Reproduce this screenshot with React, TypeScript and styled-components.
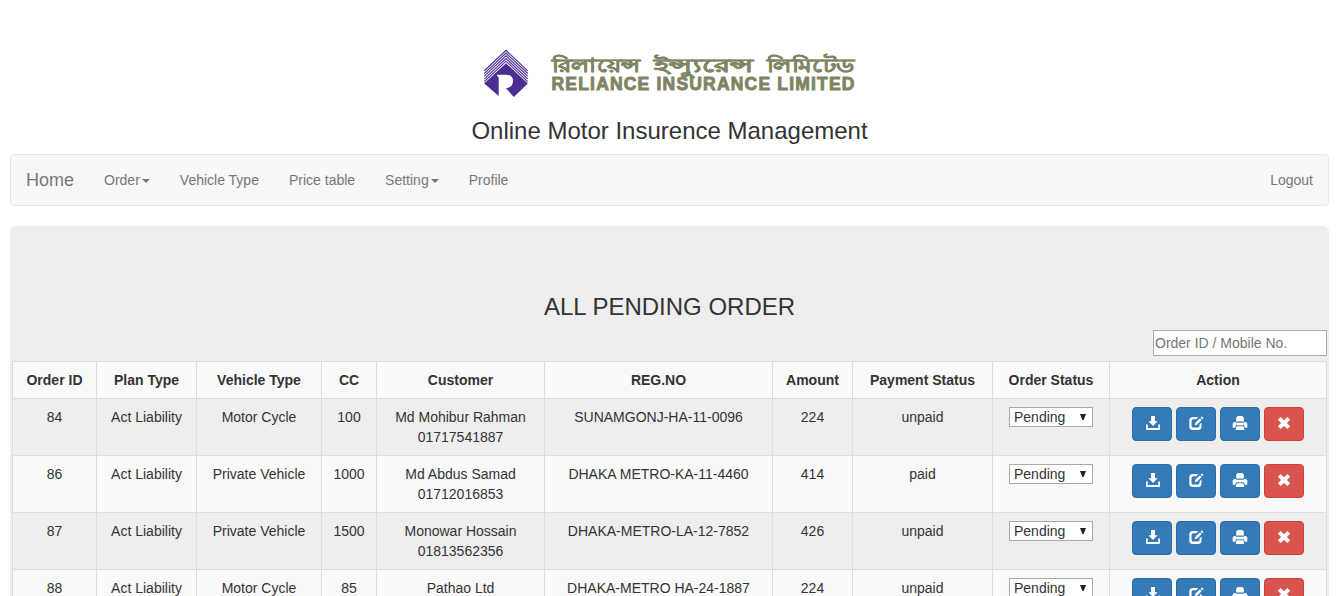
import React from "react";
import styled, { createGlobalStyle } from "styled-components";

const GlobalStyle = createGlobalStyle`
  *, *::before, *::after { box-sizing: border-box; }
  body {
    margin: 0;
    background: #fff;
    color: #333;
    font: 14px/20px "Liberation Sans", Arial, sans-serif;
  }
`;

const Page = styled.div`
  height: 596px;
  overflow: hidden;
  padding: 0 10px;
`;

const Header = styled.header`
  display: flex;
  flex-direction: column;
  align-items: center;
  height: 154px;
  padding-top: 49px;
`;

const Brand = styled.div`
  display: flex;
  width: 371px;
  height: 50px;
`;

const Emblem = styled.svg`
  flex: none;
  width: 46px;
  height: 50px;
  margin-right: 21px;
`;

const BrandNames = styled.svg`
  flex: none;
  width: 306px;
  height: 50px;
  overflow: visible;
  fill: #7f8463;
  stroke: #7f8463;
  font-family: "Liberation Sans", Arial, sans-serif;
  font-weight: 700;
`;

const Heading = styled.h3`
  margin: 0;
  color: #333;
  font-size: 24px;
  line-height: 26px;
  font-weight: 400;
  text-align: center;
`;

const Tagline = styled(Heading)`
  margin-top: 19px;
`;

const Navbar = styled.nav`
  display: flex;
  align-items: center;
  height: 52px;
  margin-bottom: 20px;
  background: #f8f8f8;
  border: 1px solid #e7e7e7;
  border-radius: 4px;
`;

const NavLink = styled.a<{ $brand?: boolean; $end?: boolean }>`
  display: flex;
  align-items: center;
  padding: 0 15px;
  margin-left: ${(p) => (p.$end ? "auto" : "0")};
  color: #777;
  font-size: ${(p) => (p.$brand ? "18px" : "14px")};
  line-height: 20px;
  text-decoration: none;
`;

const Caret = styled.span`
  margin: 2px 0 0 2px;
  border-top: 4px solid #777;
  border-left: 4px solid transparent;
  border-right: 4px solid transparent;
`;

const Panel = styled.main`
  display: flex;
  flex-direction: column;
  padding: 68px 2px 48px;
  background: #eee;
  border-radius: 6px;
`;

const Search = styled.input`
  align-self: flex-end;
  width: 174px;
  height: 26px;
  margin: 10px 0 5px;
  padding: 1px;
  border: 1px solid #a9a9a9;
  border-radius: 0;
  background: #fff;
  font: 14px/20px "Liberation Sans", Arial, sans-serif;
  &::placeholder { color: #757575; }
`;

const Table = styled.table`
  width: 1315px;
  table-layout: fixed;
  border-collapse: collapse;
  text-align: center;
`;

const Col = styled.col<{ $w: number }>`
  width: ${(p) => p.$w}px;
`;

const Row = styled.tr<{ $light?: boolean }>`
  background: ${(p) => (p.$light ? "#f9f9f9" : "#eee")};
`;

const Th = styled.th`
  padding: 8px;
  border: 1px solid #ddd;
  font-weight: 700;
`;

const Td = styled.td<{ $tight?: boolean }>`
  height: 57px;
  padding: ${(p) => (p.$tight ? "8px 0" : "8px")};
  border: 1px solid #ddd;
  vertical-align: top;
  white-space: pre-line;
`;

const StatusSelect = styled.button`
  display: flex;
  align-items: center;
  justify-content: space-between;
  width: 84px;
  height: 20px;
  margin: 0 auto;
  padding: 0 6px 0 4px;
  border: 1px solid #a9a9a9;
  border-radius: 0;
  background: #fff;
  color: #333;
  font: 14px/18px "Liberation Sans", Arial, sans-serif;
`;

const Arrow = styled.span`
  width: 6px;
  height: 6px;
  background: #222;
  clip-path: polygon(0 0, 100% 0, 60% 100%, 40% 100%);
`;

const Actions = styled.div`
  display: flex;
  justify-content: center;
  gap: 4px;
`;

const ActionButton = styled.button<{ $danger?: boolean }>`
  display: flex;
  align-items: center;
  justify-content: center;
  width: 40px;
  height: 34px;
  padding: 0;
  border: 1px solid ${(p) => (p.$danger ? "#d43f3a" : "#2e6da4")};
  border-radius: 4px;
  background: ${(p) => (p.$danger ? "#d9534f" : "#337ab7")};
`;

const Icon = styled.svg`
  width: 16px;
  height: 16px;
  margin-bottom: 2px;
  fill: #fff;
`;

const DownloadIcon = () => (
  <Icon viewBox="0 0 16 16">
    <path d="M7 1h4v5.2h2.6L9 11 4.4 6.2H7zM2 9.5h1.8V13h10.4V9.5H16v4.8q0 .7-.7.7H2.7q-.7 0-.7-.7z" />
  </Icon>
);

const EditIcon = () => (
  <Icon viewBox="0 0 16 16">
    <path d="M10.2 2 8.4 4.3H5.2Q3.6 4.3 3.6 5.9v5Q3.6 12.5 5.2 12.5h4.7q1.6 0 1.6-1.6V9.4l2-1.9v4q0 3.5-3.5 3.5H5q-3.7 0-3.7-3.5V5.6Q1.3 2 5 2z" />
    <path d="m12 3.2 1.7 1.7-4.4 4.5-2.7.9.9-2.7zM12.6 2.5l.8-.8q.4-.4.8 0l1 1q.4.4 0 .8l-.8.8z" />
  </Icon>
);

const PrintIcon = () => (
  <Icon viewBox="0 0 16 16">
    <path d="M5.7 1h4.6l1.5 1.6V6.5H4.2V2.6z" />
    <path d="M2.1 7h1.4q.4.8 1.2.8h6.6q.8 0 1.2-.8h1.4l1.4 1.4v4.3h-2.5l-.8-2.4H4l-.8 2.4H.7V8.4z" />
    <path d="M4.7 11.3h6.6l1.2 3.7h-9z" />
  </Icon>
);

const RemoveIcon = () => (
  <Icon viewBox="0 0 16 16">
    <path d="M4.6 2 8 5.2 11.4 2l2.8 2.8L10.9 8l3.3 3.3-2.8 2.8L8 10.9l-3.4 3.2-2.8-2.8L5.1 8 1.8 4.8z" />
  </Icon>
);

const columns: [string, number][] = [
  ["Order ID", 84],
  ["Plan Type", 100],
  ["Vehicle Type", 125],
  ["CC", 55],
  ["Customer", 168],
  ["REG.NO", 228],
  ["Amount", 80],
  ["Payment Status", 140],
  ["Order Status", 117],
  ["Action", 217],
];

const orders = [
  ["84", "Act Liability", "Motor Cycle", "100", "Md Mohibur Rahman\n01717541887", "SUNAMGONJ-HA-11-0096", "224", "unpaid"],
  ["86", "Act Liability", "Private Vehicle", "1000", "Md Abdus Samad\n01712016853", "DHAKA METRO-KA-11-4460", "414", "paid"],
  ["87", "Act Liability", "Private Vehicle", "1500", "Monowar Hossain\n01813562356", "DHAKA-METRO-LA-12-7852", "426", "unpaid"],
  ["88", "Act Liability", "Motor Cycle", "85", "Pathao Ltd", "DHAKA-METRO HA-24-1887", "224", "unpaid"],
];

const chevrons = [0, 2.7, 5.4, 8.1, 10.8];

const bengaliWords: [string, number, number][] = [
  ["রিলায়েন্স", 1, 88],
  ["ইন্স্যুরেন্স", 103, 99],
  ["লিমিটেড", 216, 87],
];

export default function App() {
  return (
    <Page>
      <GlobalStyle />
      <Header>
        <Brand>
          <Emblem viewBox="0 0 46 50">
            {chevrons.map((y) => (
              <path key={y} d={`M.3 ${21.8 + y} 22 ${1.4 + y} 43.7 ${21.8 + y}`} fill="none" stroke="#4b2e91" strokeWidth="1.15" />
            ))}
            <path d="M22 14.2 43.8 34.4 29.8 48 22 39.2Q29 38.4 29 32 29 25.7 22.2 25.7H13v1.2q1.7.3 1.7 2V47L.2 34.4z" fill="#4b2e91" />
          </Emblem>
          <BrandNames viewBox="0 0 306 50">
            {bengaliWords.map(([word, x, width]) => (
              <text key={word} x={x} y="22.5" fontSize="18.5" textLength={width} lengthAdjust="spacingAndGlyphs" strokeWidth=".5">{word}</text>
            ))}
            <text x="0.5" y="40.7" fontSize="17.5" textLength="303" lengthAdjust="spacing" strokeWidth=".9">RELIANCE INSURANCE LIMITED</text>
          </BrandNames>
        </Brand>
        <Tagline>Online Motor Insurence Management</Tagline>
      </Header>
      <Navbar>
        <NavLink $brand>Home</NavLink>
        <NavLink>Order<Caret /></NavLink>
        <NavLink>Vehicle Type</NavLink>
        <NavLink>Price table</NavLink>
        <NavLink>Setting<Caret /></NavLink>
        <NavLink>Profile</NavLink>
        <NavLink $end>Logout</NavLink>
      </Navbar>
      <Panel>
        <Heading>ALL PENDING ORDER</Heading>
        <Search placeholder="Order ID / Mobile No." />
        <Table>
          <colgroup>
            {columns.map(([name, w]) => <Col key={name} $w={w} />)}
          </colgroup>
          <thead>
            <Row $light>{columns.map(([name]) => <Th key={name}>{name}</Th>)}</Row>
          </thead>
          <tbody>
            {orders.map((cells, i) => (
              <Row key={cells[0]} $light={i % 2 === 1}>
                {cells.map((cell, j) => <Td key={j}>{cell}</Td>)}
                <Td><StatusSelect>Pending<Arrow /></StatusSelect></Td>
                <Td $tight>
                  <Actions>
                    <ActionButton aria-label="Download"><DownloadIcon /></ActionButton>
                    <ActionButton aria-label="Edit"><EditIcon /></ActionButton>
                    <ActionButton aria-label="Print"><PrintIcon /></ActionButton>
                    <ActionButton aria-label="Remove" $danger><RemoveIcon /></ActionButton>
                  </Actions>
                </Td>
              </Row>
            ))}
          </tbody>
        </Table>
      </Panel>
    </Page>
  );
}
